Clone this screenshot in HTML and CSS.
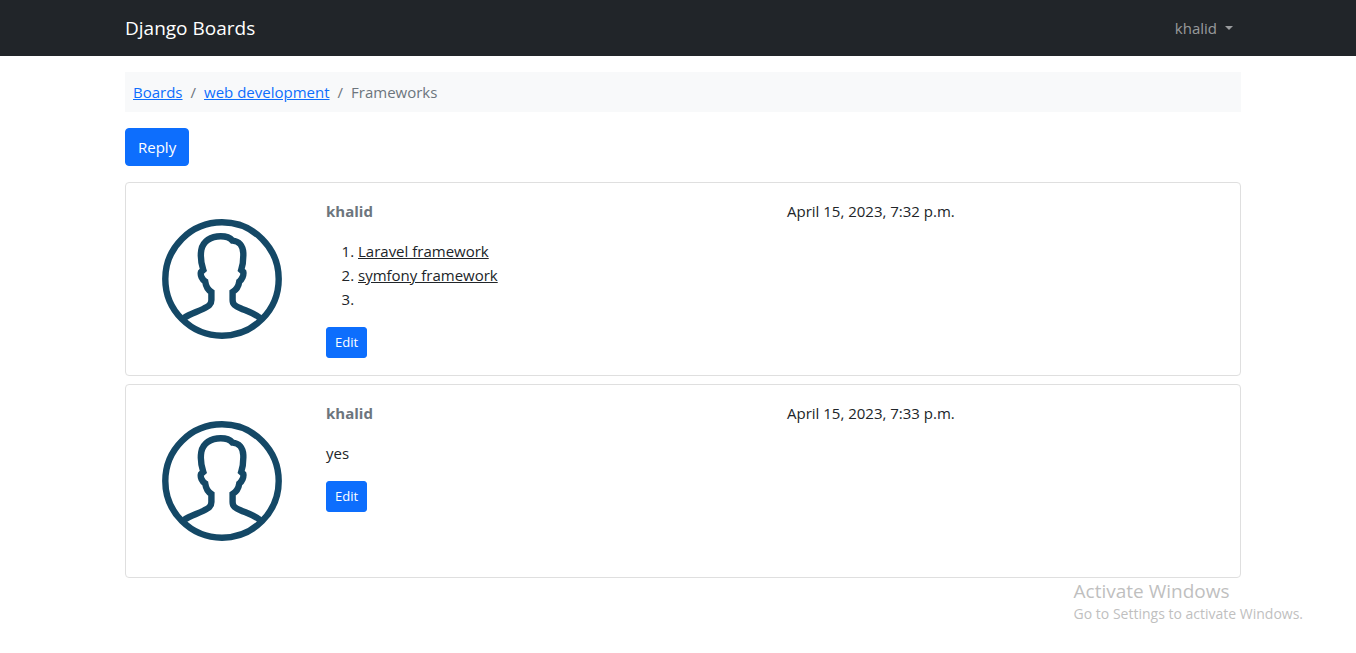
FILE: index.html
```html
<!DOCTYPE html>
<html lang="en">
<head>
<meta charset="utf-8">
<meta name="viewport" content="width=device-width, initial-scale=1">
<title>Frameworks - Django Boards</title>
<link rel="stylesheet" href="styles.css">
</head>
<body>
<svg class="sprite" aria-hidden="true">
  <symbol id="avatar" viewBox="0 0 160 160">
    <g fill="none" stroke="#144866" stroke-width="6.4">
      <circle cx="80" cy="80" r="56.7"/>
      <path d="M42 119C48 115 55 113 61 110C67 107 69.400 105.500 69.400 101V93C66 91 64 88 63.200 82.500C60 80.500 58 76 59 73L61.300 71C59 64 58.300 57 59.300 51C61 42 69 37.300 78.700 37.300C84 37.300 88 38.700 90.500 41.600C97 42 101 47 101.300 54C101.500 60 100.800 66 99.200 71L101.300 73C102 76 100 80.500 97.300 82.500C96.500 88 94 91 90.600 93V101C90.600 105.500 93 107 99 109.500C105 112 112 114 118 119"/>
    </g>
  </symbol>
</svg>

<nav class="navbar">
  <div class="container navbar-inner">
    <a class="brand" href="#">Django Boards</a>
    <button class="user-toggle" type="button" aria-haspopup="true">khalid <span class="caret"></span></button>
  </div>
</nav>

<main class="page">
  <div class="container">
    <nav aria-label="breadcrumb">
      <ol class="breadcrumb">
        <li><a href="#">Boards</a></li>
        <li><a href="#">web development</a></li>
        <li>Frameworks</li>
      </ol>
    </nav>

    <button class="btn" type="button">Reply</button>

    <div class="posts">
      <article class="card">
        <svg class="avatar" role="img" aria-label="khalid"><use href="#avatar"/></svg>
        <div class="post">
          <div class="post-head">
            <strong class="author">khalid</strong>
            <time datetime="2023-04-15T19:32">April 15, 2023, 7:32 p.m.</time>
          </div>
          <ol class="message-list">
            <li><u>Laravel framework</u></li>
            <li><u>symfony framework</u></li>
            <li></li>
          </ol>
          <button class="btn btn-sm" type="button">Edit</button>
        </div>
      </article>

      <article class="card">
        <svg class="avatar" role="img" aria-label="khalid"><use href="#avatar"/></svg>
        <div class="post">
          <div class="post-head">
            <strong class="author">khalid</strong>
            <time datetime="2023-04-15T19:33">April 15, 2023, 7:33 p.m.</time>
          </div>
          <p class="message">yes</p>
          <button class="btn btn-sm" type="button">Edit</button>
        </div>
      </article>
    </div>
  </div>
</main>

<aside class="watermark">
  <div class="watermark-title">Activate Windows</div>
  <div>Go to Settings to activate Windows.</div>
</aside>
</body>
</html>
```
FILE: styles.css
```css
*,
*::before,
*::after {
  box-sizing: border-box;
}

body {
  margin: 0;
  background: #fff;
  color: #212529;
  font-family: "Segoe UI", "Open Sans", "Noto Sans", sans-serif;
  font-size: 15px;
  line-height: 24px;
}

button {
  font-family: inherit;
  cursor: pointer;
}

.sprite {
  display: none;
}

.container {
  width: 100%;
  max-width: 1140px;
  margin: 0 auto;
  padding: 0 12px;
}

.page {
  padding-left: 10px;
}

.navbar {
  padding: 8px 0 8px 10px;
  background: #212529;
}

.navbar-inner {
  display: flex;
  align-items: center;
  justify-content: space-between;
}

.brand {
  padding: 5px 0;
  color: #fff;
  font-size: 19px;
  line-height: 30px;
  text-decoration: none;
}

.user-toggle {
  display: flex;
  align-items: center;
  gap: 8px;
  padding: 8px;
  border: 0;
  background: none;
  color: rgba(255, 255, 255, 0.55);
  font-size: 15px;
  line-height: 24px;
}

.caret {
  border-top: 4px solid;
  border-right: 4px solid transparent;
  border-left: 4px solid transparent;
}

.breadcrumb {
  display: flex;
  flex-wrap: wrap;
  margin: 16px 0;
  padding: 8px;
  background: #f8f9fa;
  color: #6c757d;
  list-style: none;
}

.breadcrumb li + li::before {
  content: "/";
  padding: 0 8px;
}

.breadcrumb a {
  color: #0d6efd;
}

.btn {
  padding: 6px 12px;
  border: 1px solid #0d6efd;
  border-radius: 4px;
  background: #0d6efd;
  color: #fff;
  font-size: 15px;
  line-height: 24px;
}

.btn-sm {
  padding: 4px 8px;
  border-radius: 3px;
  font-size: 13px;
  line-height: 21px;
}

.posts {
  display: grid;
  gap: 8px;
  margin-top: 16px;
}

.card {
  display: grid;
  grid-template-columns: 160px 1fr;
  gap: 24px;
  padding: 16px;
  border: 1px solid #dfdfdf;
  border-radius: 4px;
}

.avatar {
  display: block;
  width: 160px;
  height: 160px;
}

.post-head {
  display: grid;
  grid-template-columns: 1fr 1fr;
  column-gap: 24px;
  margin-bottom: 16px;
}

.author {
  color: #6c757d;
}

.message {
  margin: 0 0 16px;
}

.message-list {
  margin: 0 0 16px;
  padding-left: 32px;
}

.watermark {
  position: absolute;
  right: 53px;
  bottom: 29px;
  color: #bfbfbf;
  font-size: 14px;
  line-height: 20px;
}

.watermark-title {
  font-size: 19px;
  line-height: 25px;
}
```
